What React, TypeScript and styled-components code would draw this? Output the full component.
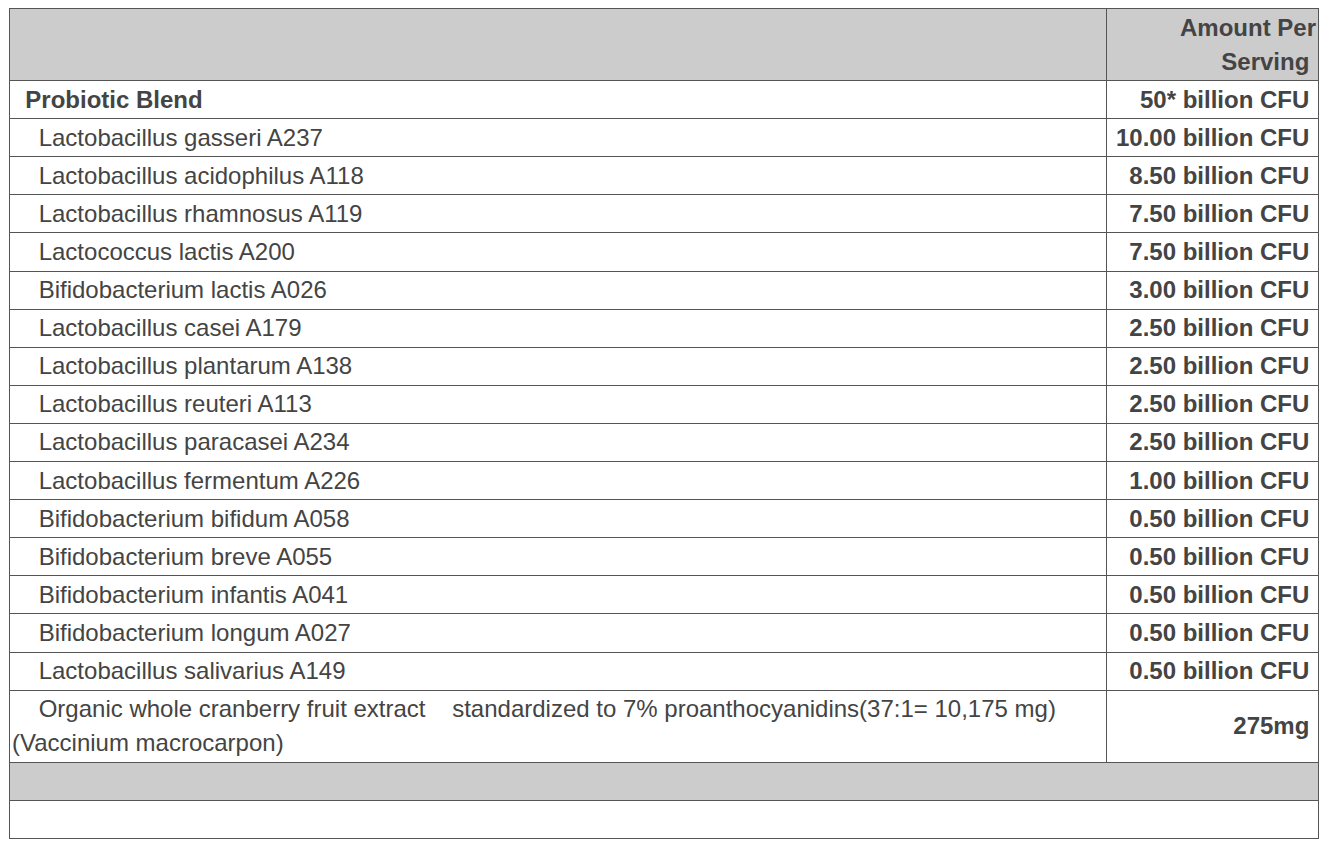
import styled, { createGlobalStyle } from 'styled-components'

const GlobalStyle = createGlobalStyle`
  body {
    margin: 8px 7px 8px 9px;
    background: #fff;
    font-family: 'Liberation Sans', Arial, sans-serif;
    color: #444;
  }
`

const FactsTable = styled.table`
  width: 100%;
  border-collapse: collapse;
  table-layout: fixed;
  font-size: 24px;
  line-height: 34px;
  color: #444;
`

const HeadRow = styled.tr`
  background: #ccc;
`

const HeadCell = styled.th`
  border: 1px solid #555;
  padding: 1.55px 2px;
  font-weight: bold;
  text-align: right;
`

const NameCell = styled.td<{ $bold?: boolean }>`
  border: 1px solid #555;
  padding: 1.55px 2px;
  font-weight: ${({ $bold }) => ($bold ? 'bold' : 'normal')};
  text-align: left;
  vertical-align: middle;
`

const AmountCell = styled.td`
  border: 1px solid #555;
  padding: 1.55px 2px;
  font-weight: bold;
  text-align: right;
  vertical-align: middle;
  white-space: nowrap;
`

const BlankRow = styled.tr<{ $shaded?: boolean }>`
  background: ${({ $shaded }) => ($shaded ? '#ccc' : '#fff')};
  td {
    border: 1px solid #555;
    padding: 1.55px 2px;
  }
`

const NB = '\u00a0'

const strains: [string, string][] = [
  ['Lactobacillus gasseri A237', '10.00 billion CFU'],
  ['Lactobacillus acidophilus A118', '8.50 billion CFU'],
  ['Lactobacillus rhamnosus A119', '7.50 billion CFU'],
  ['Lactococcus lactis A200', '7.50 billion CFU'],
  ['Bifidobacterium lactis A026', '3.00 billion CFU'],
  ['Lactobacillus casei A179', '2.50 billion CFU'],
  ['Lactobacillus plantarum A138', '2.50 billion CFU'],
  ['Lactobacillus reuteri A113', '2.50 billion CFU'],
  ['Lactobacillus paracasei A234', '2.50 billion CFU'],
  ['Lactobacillus fermentum A226', '1.00 billion CFU'],
  ['Bifidobacterium bifidum A058', '0.50 billion CFU'],
  ['Bifidobacterium breve A055', '0.50 billion CFU'],
  ['Bifidobacterium infantis A041', '0.50 billion CFU'],
  ['Bifidobacterium longum A027', '0.50 billion CFU'],
  ['Lactobacillus salivarius A149', '0.50 billion CFU'],
]

const App = () => {
  return (
    <>
      <GlobalStyle />
      <FactsTable>
        <colgroup>
          <col />
          <col style={{ width: 212 }} />
        </colgroup>
        <thead>
          <HeadRow>
            <HeadCell>{NB}</HeadCell>
            <HeadCell>Amount Per Serving{NB}</HeadCell>
          </HeadRow>
        </thead>
        <tbody>
          <tr>
            <NameCell $bold>{NB + NB}Probiotic Blend</NameCell>
            <AmountCell>50* billion CFU{NB}</AmountCell>
          </tr>
          {strains.map(([name, amount]) => (
            <tr key={name}>
              <NameCell>{NB.repeat(4)}{name}</NameCell>
              <AmountCell>{amount}{NB}</AmountCell>
            </tr>
          ))}
          <tr>
            <NameCell>
              {NB.repeat(4)}Organic whole cranberry fruit extract{NB.repeat(3)} standardized to 7% proanthocyanidins(37:1= 10,175 mg) (Vaccinium macrocarpon)
            </NameCell>
            <AmountCell>275mg{NB}</AmountCell>
          </tr>
          <BlankRow $shaded>
            <td colSpan={2}>{NB}</td>
          </BlankRow>
          <BlankRow>
            <td colSpan={2}>{NB}</td>
          </BlankRow>
        </tbody>
      </FactsTable>
    </>
  )
}

export default App
